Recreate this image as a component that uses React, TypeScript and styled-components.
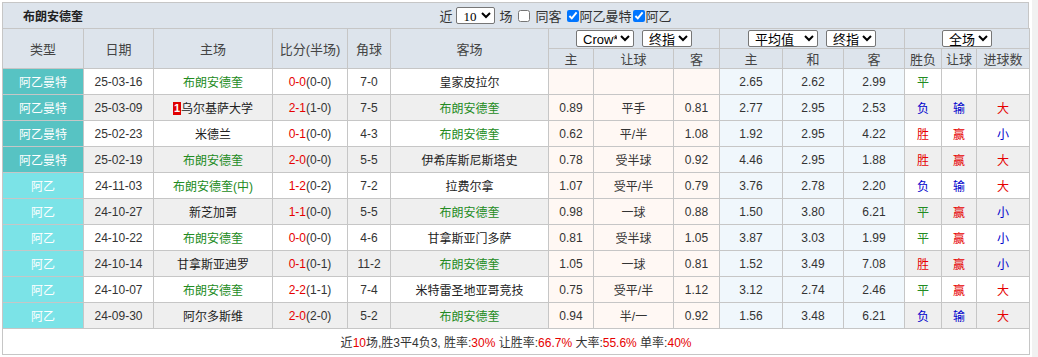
import React from "react";
import styled, { createGlobalStyle } from "styled-components";

const GlobalStyle = createGlobalStyle`
  body {
    margin: 0;
    background: #ffffff;
    font-family: "Liberation Sans", "Noto Sans CJK SC", sans-serif;
    font-size: 12px;
    color: #333333;
  }
`;

type Result = "胜" | "平" | "负" | "";

interface Match {
  league: "阿乙曼特" | "阿乙";
  date: string;
  home: string;
  homeBadge?: string;
  score: string;
  half: string;
  corner: string;
  away: string;
  crow: [string, string, string];
  avg: [string, string, string];
  result: Result;
  handicap: "赢" | "输" | "";
  goals: "大" | "小" | "";
}

const TEAM = "布朗安德奎";

const matches: Match[] = [
  { league: "阿乙曼特", date: "25-03-16", home: TEAM, score: "0-0", half: "(0-0)", corner: "7-0", away: "皇家皮拉尔", crow: ["", "", ""], avg: ["2.65", "2.62", "2.99"], result: "平", handicap: "", goals: "" },
  { league: "阿乙曼特", date: "25-03-09", home: "乌尔基萨大学", homeBadge: "1", score: "2-1", half: "(1-0)", corner: "7-5", away: TEAM, crow: ["0.89", "平手", "0.81"], avg: ["2.77", "2.95", "2.53"], result: "负", handicap: "输", goals: "大" },
  { league: "阿乙曼特", date: "25-02-23", home: "米德兰", score: "0-1", half: "(0-0)", corner: "4-3", away: TEAM, crow: ["0.62", "平/半", "1.08"], avg: ["1.92", "2.95", "4.22"], result: "胜", handicap: "赢", goals: "小" },
  { league: "阿乙曼特", date: "25-02-19", home: TEAM, score: "2-0", half: "(0-0)", corner: "5-5", away: "伊希库斯尼斯塔史", crow: ["0.78", "受半球", "0.92"], avg: ["4.46", "2.95", "1.88"], result: "胜", handicap: "赢", goals: "大" },
  { league: "阿乙", date: "24-11-03", home: TEAM + "(中)", score: "1-2", half: "(0-2)", corner: "7-2", away: "拉费尔拿", crow: ["1.07", "受平/半", "0.79"], avg: ["3.76", "2.78", "2.20"], result: "负", handicap: "输", goals: "大" },
  { league: "阿乙", date: "24-10-27", home: "新芝加哥", score: "1-1", half: "(0-0)", corner: "5-5", away: TEAM, crow: ["0.98", "一球", "0.88"], avg: ["1.50", "3.80", "6.21"], result: "平", handicap: "赢", goals: "小" },
  { league: "阿乙", date: "24-10-22", home: TEAM, score: "0-0", half: "(0-0)", corner: "4-6", away: "甘拿斯亚门多萨", crow: ["0.81", "受半球", "1.05"], avg: ["3.87", "3.03", "1.99"], result: "平", handicap: "赢", goals: "小" },
  { league: "阿乙", date: "24-10-14", home: "甘拿斯亚迪罗", score: "0-1", half: "(0-1)", corner: "11-2", away: TEAM, crow: ["1.05", "一球", "0.81"], avg: ["1.52", "3.49", "7.08"], result: "胜", handicap: "赢", goals: "小" },
  { league: "阿乙", date: "24-10-07", home: TEAM, score: "2-2", half: "(1-1)", corner: "7-4", away: "米特雷圣地亚哥竞技", crow: ["0.75", "受平/半", "1.12"], avg: ["3.12", "2.74", "2.46"], result: "平", handicap: "赢", goals: "大" },
  { league: "阿乙", date: "24-09-30", home: "阿尔多斯维", score: "2-0", half: "(2-0)", corner: "5-2", away: TEAM, crow: ["0.94", "半/一", "0.92"], avg: ["1.56", "3.48", "6.21"], result: "负", handicap: "输", goals: "大" },
];

const widths = [81, 70, 119, 75, 43, 158, 45, 80, 46, 63, 61, 61, 37, 35, 53];

const Page = styled.div`
  display: flex;
  align-items: stretch;
  min-height: 357px;
`;

const Main = styled.div`
  padding: 2px 0 0 2px;
  width: 1027px;
`;

const ScrollStrip = styled.div`
  margin-left: auto;
  width: 6px;
  background: #f1f1f1;
`;

const TitleBar = styled.div`
  display: flex;
  align-items: center;
  height: 25px;
  background: #dde4ec;
  border: 1px solid #c6c6c6;
  border-bottom: none;
`;

const Title = styled.div`
  width: 60px;
  padding-left: 20px;
  font-weight: bold;
  font-size: 12px;
  color: #222;
`;

const Filters = styled.div`
  flex: 1;
  display: flex;
  justify-content: center;
  align-items: center;
  font-size: 13px;
  color: #333;
`;

const Label = styled.label`
  display: inline-flex;
  align-items: center;
`;

const Check = styled.input<{ $gap?: boolean }>`
  margin: ${(p) => (p.$gap ? "0 5px 0 6px" : "0 1px 0 1px")};
  width: 12px;
  height: 12px;
  accent-color: #0075ff;
`;

const Select = styled.select<{ $w: number; $serif?: boolean }>`
  width: ${(p) => p.$w}px;
  height: 17px;
  margin: 0 4px;
  padding: 0 0 0 2px;
  border: 1px solid #767676;
  border-radius: 2px;
  background: #ffffff;
  color: #000;
  font-size: 13px;
  font-family: ${(p) => (p.$serif ? '"Liberation Serif", serif' : '"Liberation Sans", "Noto Sans CJK SC", sans-serif')};
`;

const Table = styled.table`
  width: 1027px;
  table-layout: fixed;
  border-collapse: collapse;
  font-size: 12px;

  th, td {
    border: 1px solid #c6c6c6;
    padding: 0;
    text-align: center;
    white-space: nowrap;
    overflow: hidden;
  }
  th {
    background: #dde4ec;
    font-weight: normal;
    font-size: 13px;
    color: #444;
  }
`;

const HeadRow = styled.tr<{ $h: number }>`
  height: ${(p) => p.$h}px;
`;

const Row = styled.tr`
  height: 26px;
`;

const TypeCell = styled.td<{ $main: boolean }>`
  background: ${(p) => (p.$main ? "#57c3c3" : "#7be3e7")};
  color: #ffffff;
`;

const Cell = styled.td<{ $alt: boolean }>`
  background: ${(p) => (p.$alt ? "#efefef" : "#ffffff")};
`;

const CrowCell = styled.td`
  background: #fff8f4;
`;

const AvgCell = styled.td`
  background: #f0f7fc;
`;

const Team = styled.span<{ $own: boolean }>`
  color: ${(p) => (p.$own ? "#228b22" : "#222")};
`;

const Badge = styled.span`
  display: inline-block;
  background: #e00000;
  color: #fff;
  font-weight: bold;
  font-size: 11px;
  line-height: 13px;
  padding: 0 1px;
  vertical-align: 1px;
`;

const Red = styled.span`
  color: #e60000;
`;

const Mark = styled.span<{ $c: string }>`
  color: ${(p) => p.$c};
`;

const FootCell = styled.td`
  height: 25px;
  background: #fff;
  font-size: 12px;
  color: #333;
`;

const resultColor = (r: string) =>
  r === "胜" || r === "赢" || r === "大" ? "#e60000" : r === "平" ? "#228b22" : "#0000cc";

export default function App() {
  return (
    <Page>
      <GlobalStyle />
      <Main>
        <TitleBar>
          <Title>{TEAM}</Title>
          <Filters>
            近
            <Select $w={39} $serif defaultValue="10">
              <option>10</option>
              <option>20</option>
            </Select>
            场
            <Label>
              <Check type="checkbox" $gap />同客
            </Label>
            <Label>
              <Check type="checkbox" defaultChecked style={{ marginLeft: 5 }} />阿乙曼特
            </Label>
            <Label>
              <Check type="checkbox" defaultChecked />阿乙
            </Label>
          </Filters>
        </TitleBar>
        <Table>
          <colgroup>
            {widths.map((w, i) => (
              <col key={i} style={{ width: w }} />
            ))}
          </colgroup>
          <thead>
            <HeadRow $h={20}>
              <th rowSpan={2}>类型</th>
              <th rowSpan={2}>日期</th>
              <th rowSpan={2}>主场</th>
              <th rowSpan={2}>比分(半场)</th>
              <th rowSpan={2}>角球</th>
              <th rowSpan={2}>客场</th>
              <th colSpan={3}>
                <Select $w={58} defaultValue="Crow*">
                  <option>Crow*</option>
                </Select>
                <Select $w={50} defaultValue="终指">
                  <option>终指</option>
                </Select>
              </th>
              <th colSpan={3}>
                <Select $w={70} defaultValue="平均值">
                  <option>平均值</option>
                </Select>
                <Select $w={50} defaultValue="终指">
                  <option>终指</option>
                </Select>
              </th>
              <th colSpan={3}>
                <Select $w={50} defaultValue="全场">
                  <option>全场</option>
                </Select>
              </th>
            </HeadRow>
            <HeadRow $h={19}>
              <th>主</th>
              <th>让球</th>
              <th>客</th>
              <th>主</th>
              <th>和</th>
              <th>客</th>
              <th>胜负</th>
              <th>让球</th>
              <th>进球数</th>
            </HeadRow>
          </thead>
          <tbody>
            {matches.map((m, i) => {
              const alt = i % 2 === 1;
              return (
                <Row key={m.date}>
                  <TypeCell $main={m.league === "阿乙曼特"}>{m.league}</TypeCell>
                  <Cell $alt={alt}>{m.date}</Cell>
                  <Cell $alt={alt}>
                    {m.homeBadge && <Badge>{m.homeBadge}</Badge>}
                    <Team $own={m.home.startsWith(TEAM)}>{m.home}</Team>
                  </Cell>
                  <Cell $alt={alt}>
                    <Red>{m.score}</Red>
                    {m.half}
                  </Cell>
                  <Cell $alt={alt}>{m.corner}</Cell>
                  <Cell $alt={alt}>
                    <Team $own={m.away === TEAM}>{m.away}</Team>
                  </Cell>
                  {m.crow.map((c, j) => (
                    <CrowCell key={j}>{c}</CrowCell>
                  ))}
                  {m.avg.map((c, j) => (
                    <AvgCell key={j}>{c}</AvgCell>
                  ))}
                  <Cell $alt={alt}>
                    <Mark $c={resultColor(m.result)}>{m.result}</Mark>
                  </Cell>
                  <Cell $alt={alt}>
                    <Mark $c={resultColor(m.handicap)}>{m.handicap}</Mark>
                  </Cell>
                  <Cell $alt={alt}>
                    <Mark $c={resultColor(m.goals)}>{m.goals}</Mark>
                  </Cell>
                </Row>
              );
            })}
            <tr>
              <FootCell colSpan={15}>
                近<Red>10</Red>场,胜3平4负3, 胜率:<Red>30%</Red> 让胜率:<Red>66.7%</Red> 大率:
                <Red>55.6%</Red> 单率:<Red>40%</Red>
              </FootCell>
            </tr>
          </tbody>
        </Table>
      </Main>
      <ScrollStrip />
    </Page>
  );
}
